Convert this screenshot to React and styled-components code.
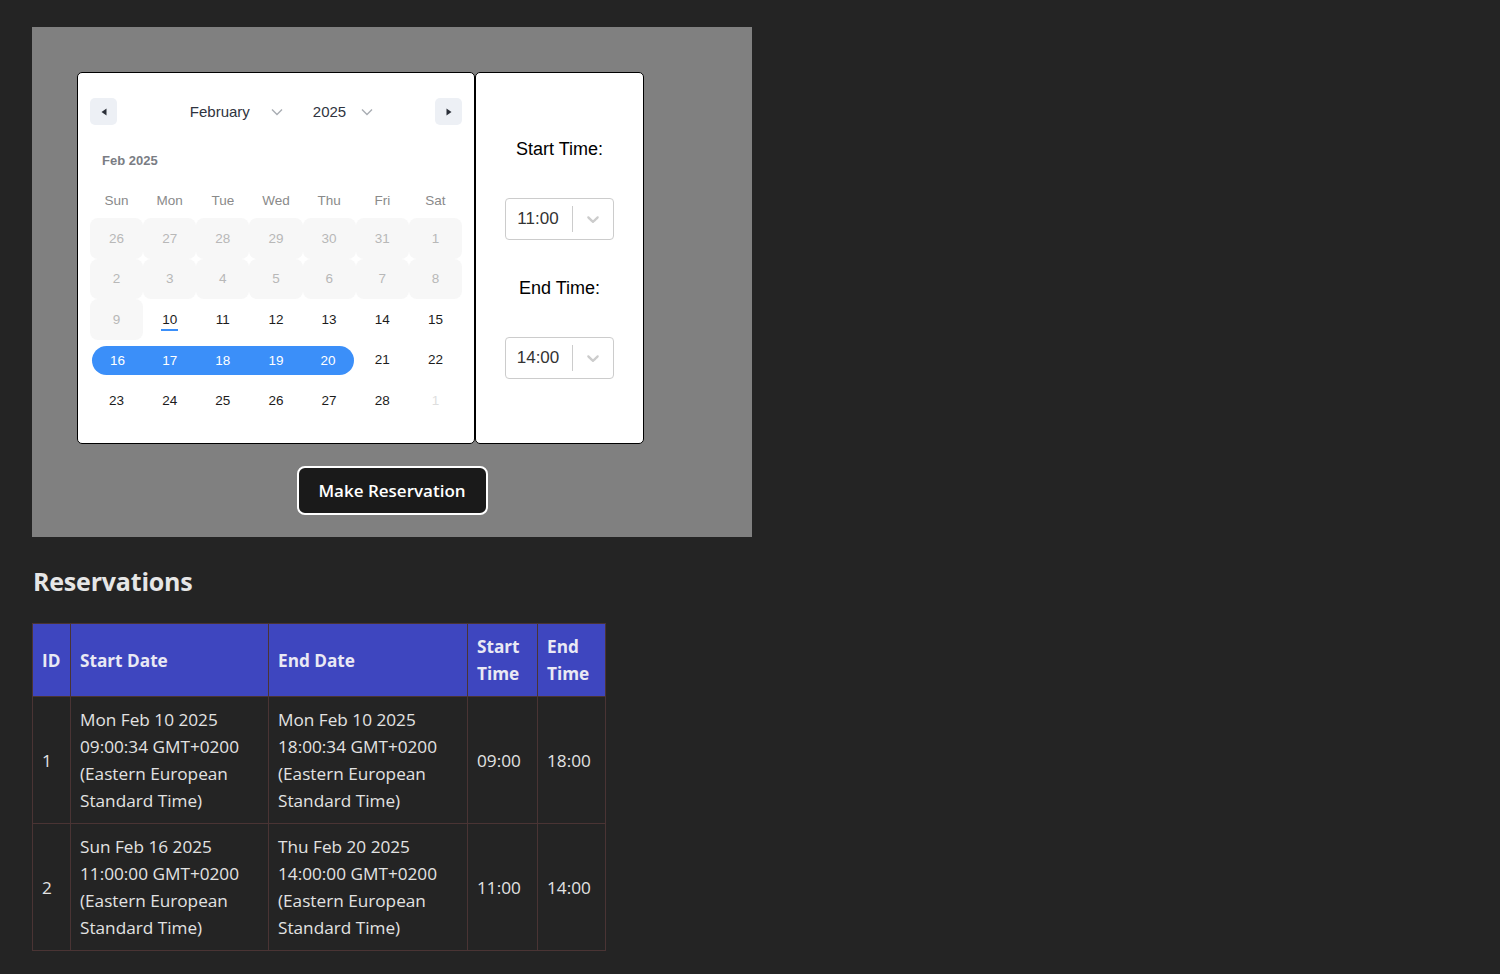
import React from "react";
import styled, { createGlobalStyle } from "styled-components";

const GlobalStyle = createGlobalStyle`
  body {
    margin: 0;
    background: #242424;
    color: rgba(255, 255, 255, 0.87);
    font-family: "Open Sans", "Noto Sans", sans-serif;
  }
  #root {
    padding: 27px 32px;
  }
`;

const Panel = styled.div`
  width: 720px;
  height: 510px;
  box-sizing: border-box;
  background: #808080;
  padding: 45px 45px 0;
  display: flex;
  flex-direction: column;
`;

const PickerRow = styled.div`
  display: flex;
  height: 372px;
`;

const CalendarBox = styled.div`
  width: 398px;
  box-sizing: border-box;
  background: #fff;
  border: 1px solid #000;
  border-radius: 5px;
  padding: 25px 12px 0;
  font-family: "Liberation Sans", Arial, sans-serif;
`;

const CalHeader = styled.div`
  display: flex;
  align-items: center;
  height: 27px;
`;

const NavButton = styled.button`
  width: 27px;
  height: 27px;
  border: none;
  border-radius: 5px;
  background: #edf0f5;
  padding: 0;
  display: flex;
  align-items: center;
  justify-content: center;
`;

const Selects = styled.div`
  flex: 1;
  display: flex;
  justify-content: center;
  align-items: center;
  gap: 30px;
  padding-left: 11px;
`;

const MonthSelect = styled.div`
  display: flex;
  align-items: center;
  gap: ${(p) => p.$gap};
  font-size: 15px;
  color: #2f3440;
`;

const MonthLabel = styled.div`
  margin: 28px 0 0 12px;
  height: 16px;
  line-height: 16px;
  font-size: 13px;
  font-weight: 700;
  color: #7a7d84;
`;

const WeekRow = styled.div`
  display: grid;
  grid-template-columns: repeat(7, 1fr);
  margin-top: 22px;
  height: 20px;
  line-height: 20px;
  font-size: 13.5px;
  color: #8a8a8a;
  text-align: center;
`;

const DayGrid = styled.div`
  display: grid;
  grid-template-columns: repeat(7, 1fr);
  grid-auto-rows: 40.5px;
  margin-top: 7px;
`;

const Day = styled.div`
  display: flex;
  align-items: center;
  justify-content: center;
  font-size: 13.5px;
  color: ${(p) =>
    p.$variant === "disabled"
      ? "#b8b8b8"
      : p.$variant === "outside"
      ? "#dedede"
      : p.$variant === "range"
      ? "#fff"
      : "#1c1c1c"};
  background: ${(p) =>
    p.$variant === "disabled"
      ? "#f7f7f7"
      : p.$variant === "range"
      ? "#3b8ff9"
      : "transparent"};
  border-radius: ${(p) =>
    p.$variant === "disabled"
      ? "8px"
      : p.$start
      ? "15px 0 0 15px"
      : p.$end
      ? "0 15px 15px 0"
      : "0"};
  margin: ${(p) =>
    p.$variant === "range"
      ? `6px ${p.$end ? "2px" : "0"} 5px ${p.$start ? "2px" : "0"}`
      : "0"};
`;

const Today = styled.span`
  position: relative;

  &::after {
    content: "";
    position: absolute;
    left: -1px;
    right: -1px;
    bottom: -4px;
    height: 2px;
    background: #3b8ff9;
  }
`;

const TimeBox = styled.div`
  width: 169px;
  box-sizing: border-box;
  background: #fff;
  border: 1px solid #000;
  border-radius: 5px;
  display: flex;
  flex-direction: column;
  align-items: center;
  padding-top: 66px;
  font-family: "Liberation Sans", Arial, sans-serif;
`;

const TimeLabel = styled.div`
  font-size: 18px;
  line-height: 20px;
  color: #000;
  margin-bottom: 39px;
`;

const SelectBox = styled.div`
  display: flex;
  align-items: center;
  height: 42px;
  box-sizing: border-box;
  border: 1px solid #cccccc;
  border-radius: 4px;
  background: #fff;
  margin-bottom: 38px;
`;

const SelectValue = styled.div`
  padding: 0 13px 0 11px;
  font-size: 17px;
  color: #333;
`;

const Separator = styled.span`
  width: 1px;
  align-self: stretch;
  margin: 7px 0;
  background: #cccccc;
`;

const Indicator = styled.div`
  display: flex;
  padding: 0 10px;
  color: #cccccc;
`;

const Actions = styled.div`
  display: flex;
  justify-content: center;
  margin-top: 22px;
`;

const ReserveButton = styled.button`
  width: 191px;
  height: 49px;
  box-sizing: border-box;
  border: 2px solid #fff;
  border-radius: 8px;
  background: #1a1a1a;
  color: #fff;
  font-family: "Open Sans", sans-serif;
  font-size: 17px;
  font-weight: 600;
  padding: 0;
`;

const Heading = styled.h2`
  margin: 27px 0 0 1px;
  font-size: 25px;
  font-weight: 700;
  line-height: 34px;
  color: #e6e6e6;
  letter-spacing: -0.2px;
`;

const Table = styled.table`
  margin-top: 25px;
  border-collapse: collapse;
  font-size: 17.2px;
  line-height: 27px;
  color: #e2e2e2;
`;

const Th = styled.th`
  width: ${(p) => p.$w}px;
  box-sizing: border-box;
  background: #3e46bf;
  border: 1px solid #4a3434;
  padding: 9px;
  text-align: left;
  font-weight: 700;
  color: #e9e9f4;
`;

const Td = styled.td`
  border: 1px solid #4a3434;
  padding: 9px;
  vertical-align: middle;
`;

const Triangle = ({ dir }) => (
  <svg width="8" height="10" viewBox="0 0 8 10">
    {dir === "left" ? (
      <path d="M6.5 1.5 L1.5 5 L6.5 8.5 Z" fill="#2b2f38" />
    ) : (
      <path d="M1.5 1.5 L6.5 5 L1.5 8.5 Z" fill="#2b2f38" />
    )}
  </svg>
);

const SmallChevron = () => (
  <svg width="12" height="8" viewBox="0 0 12 8">
    <path d="M1 1.5 L6 6.5 L11 1.5" fill="none" stroke="#a9adb3" strokeWidth="1.4" />
  </svg>
);

const SelectChevron = () => (
  <svg width="20" height="20" viewBox="0 0 20 20" fill="currentColor">
    <path d="M4.516 7.548c0.436-0.446 1.043-0.481 1.576 0l3.908 3.747 3.908-3.747c0.533-0.481 1.141-0.446 1.574 0 0.436 0.445 0.408 1.197 0 1.615-0.406 0.418-4.695 4.502-4.695 4.502-0.217 0.223-0.502 0.335-0.787 0.335s-0.57-0.112-0.789-0.335c0 0-4.287-4.084-4.695-4.502s-0.436-1.17 0-1.615z" />
  </svg>
);

const weekdays = ["Sun", "Mon", "Tue", "Wed", "Thu", "Fri", "Sat"];

const days = [
  ...[26, 27, 28, 29, 30, 31].map((d) => ({ d, v: "disabled" })),
  ...[1, 2, 3, 4, 5, 6, 7, 8, 9].map((d) => ({ d, v: "disabled" })),
  { d: 10, v: "today" },
  ...[11, 12, 13, 14, 15].map((d) => ({ d, v: "normal" })),
  ...[16, 17, 18, 19, 20].map((d) => ({ d, v: "range" })),
  ...[21, 22, 23, 24, 25, 26, 27, 28].map((d) => ({ d, v: "normal" })),
  { d: 1, v: "outside" },
];

const reservations = [
  {
    id: 1,
    start: "Mon Feb 10 2025 09:00:34 GMT+0200 (Eastern European Standard Time)",
    end: "Mon Feb 10 2025 18:00:34 GMT+0200 (Eastern European Standard Time)",
    startTime: "09:00",
    endTime: "18:00",
  },
  {
    id: 2,
    start: "Sun Feb 16 2025 11:00:00 GMT+0200 (Eastern European Standard Time)",
    end: "Thu Feb 20 2025 14:00:00 GMT+0200 (Eastern European Standard Time)",
    startTime: "11:00",
    endTime: "14:00",
  },
];

const TimeSelect = ({ value }) => (
  <SelectBox>
    <SelectValue>{value}</SelectValue>
    <Separator />
    <Indicator>
      <SelectChevron />
    </Indicator>
  </SelectBox>
);

export default function App() {
  return (
    <>
      <GlobalStyle />
      <Panel>
        <PickerRow>
          <CalendarBox>
            <CalHeader>
              <NavButton>
                <Triangle dir="left" />
              </NavButton>
              <Selects>
                <MonthSelect $gap="21px">
                  February <SmallChevron />
                </MonthSelect>
                <MonthSelect $gap="15px">
                  2025 <SmallChevron />
                </MonthSelect>
              </Selects>
              <NavButton>
                <Triangle dir="right" />
              </NavButton>
            </CalHeader>
            <MonthLabel>Feb 2025</MonthLabel>
            <WeekRow>
              {weekdays.map((w) => (
                <div key={w}>{w}</div>
              ))}
            </WeekRow>
            <DayGrid>
              {days.map((day, i) => (
                <Day
                  key={i}
                  $variant={day.v}
                  $start={day.d === 16}
                  $end={day.d === 20 && day.v === "range"}
                >
                  {day.v === "today" ? <Today>{day.d}</Today> : day.d}
                </Day>
              ))}
            </DayGrid>
          </CalendarBox>
          <TimeBox>
            <TimeLabel>Start Time:</TimeLabel>
            <TimeSelect value="11:00" />
            <TimeLabel>End Time:</TimeLabel>
            <TimeSelect value="14:00" />
          </TimeBox>
        </PickerRow>
        <Actions>
          <ReserveButton>Make Reservation</ReserveButton>
        </Actions>
      </Panel>
      <Heading>Reservations</Heading>
      <Table>
        <thead>
          <tr>
            <Th $w={38}>ID</Th>
            <Th $w={198}>Start Date</Th>
            <Th $w={199}>End Date</Th>
            <Th $w={70}>Start Time</Th>
            <Th $w={68}>End Time</Th>
          </tr>
        </thead>
        <tbody>
          {reservations.map((r) => (
            <tr key={r.id}>
              <Td>{r.id}</Td>
              <Td>{r.start}</Td>
              <Td>{r.end}</Td>
              <Td>{r.startTime}</Td>
              <Td>{r.endTime}</Td>
            </tr>
          ))}
        </tbody>
      </Table>
    </>
  );
}
